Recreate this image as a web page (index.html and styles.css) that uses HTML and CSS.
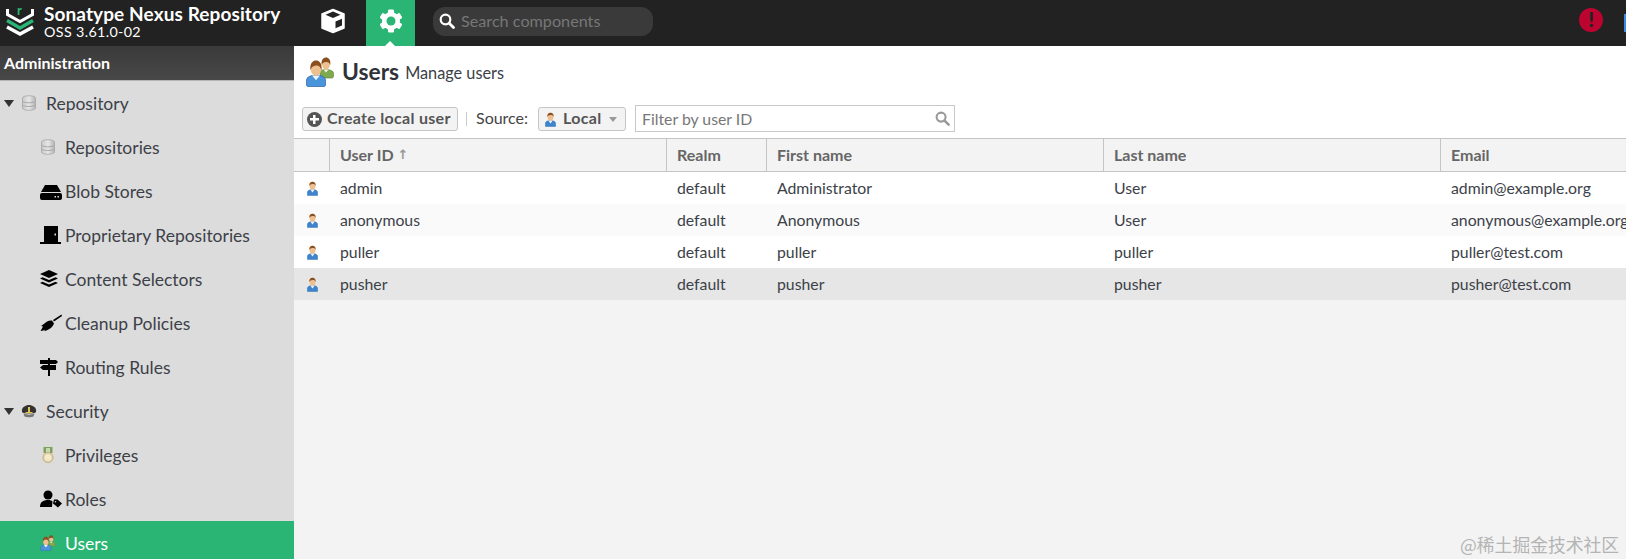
FILE: index.html
```html
<!DOCTYPE html>
<html lang="en">
<head>
<meta charset="utf-8">
<title>Users - Sonatype Nexus Repository</title>
<link rel="stylesheet" href="styles.css">
</head>
<body>
<svg class="defs" width="0" height="0" aria-hidden="true">
  <defs>
    <linearGradient id="db" x1="0" x2="1" y1="0" y2="0"><stop offset="0" stop-color="#c9c9c9"/><stop offset=".5" stop-color="#e6e6e6"/><stop offset="1" stop-color="#b5b5b5"/></linearGradient>
    <symbol id="i-db" viewBox="0 0 16 16">
      <path d="M1.500 3c0-3 13-3 13 0v10c0 3-13 3-13 0z" fill="url(#db)" stroke="#a6a6a6" stroke-width=".8"/>
      <path d="M1.500 6.300c2 2 11 2 13 0M1.500 10c2 2 11 2 13 0" fill="none" stroke="#9c9c9c" stroke-width=".8"/>
    </symbol>
    <symbol id="i-user" viewBox="2 0 12 16">
      <path d="M2.500 15.500v-3.400c0-1.600 1.800-2.400 3.300-2.800h4.400c1.500.4 3.300 1.200 3.300 2.800v3.400z" fill="#3d86cf" stroke="#2a62a6" stroke-width=".5"/>
      <path d="M5.600 9.200 8 12.300l2.400-3.100z" fill="#eef4f8"/>
      <ellipse cx="8" cy="5.200" rx="3.200" ry="4" fill="#efc08f"/>
      <path d="M4.600 5.200C4.200 1.600 6.200.5 8 .5s3.800 1.100 3.400 4.700C10.800 3.500 9.500 3 8 3.200s-2.800.3-3.400 2z" fill="#8a4f1d"/>
    </symbol>
    <symbol id="i-users" viewBox="0 0 28 30">
      <path d="M14 19v-3c0-2 2.200-3 3.800-3.400h4.400c1.600.4 5.300 1.400 5.300 3.400v3.500c0 .8-.7 1.500-1.500 1.500H17z" fill="#7fa94f" stroke="#5c8238" stroke-width=".6"/>
      <path d="M17.500 12.500l2.500 3 2.500-3z" fill="#f2f6ea"/>
      <ellipse cx="20" cy="7" rx="4" ry="5.500" fill="#efc08f"/>
      <path d="M15.700 8C15 2.500 17.500.5 20 .5s5 2 4.300 7.500c-.6-2.200-2.200-3.200-4.300-3s-3.600.8-4.300 3z" fill="#8a4f1d"/>
      <path d="M.5 28v-5c0-2.700 3.400-3.900 5.500-4.500h8c2.100.6 5.500 1.800 5.500 4.500v5c0 .8-.7 1.500-1.500 1.500H2c-.8 0-1.500-.7-1.500-1.500z" fill="#4a94dc" stroke="#2a62a6" stroke-width=".7"/>
      <path d="M6 18.500l4 4.800 4-4.800z" fill="#eef4f8"/>
      <ellipse cx="10" cy="12" rx="5.200" ry="6.800" fill="#efc08f"/>
      <path d="M4.500 13.500C3.500 6 7 3.500 10 3.500s6.500 2.500 5.500 10c-.7-3.500-2.800-5.300-5.500-5s-4.800 1.500-5.500 5z" fill="#8a4f1d"/>
    </symbol>
    <symbol id="i-cube" viewBox="0 0 26 26">
      <path d="M13 1.500 24 6v14l-11 4.500L2 20V6z" fill="#fff" stroke="#fff" stroke-width="1.500" stroke-linejoin="round"/>
      <path d="M13 3.500 20.500 6.800 13 10 5.500 6.800z" fill="#222"/>
      <path d="M15.500 13.500 22 10.800v6.700L15.500 20.300z" fill="#222"/>
    </symbol>
    <symbol id="i-gear" viewBox="0 0 24 24">
      <g fill="#fff">
        <rect x="9" y=".5" width="6" height="23" rx="1.200"/>
        <rect x="9" y=".5" width="6" height="23" rx="1.200" transform="rotate(60 12 12)"/>
        <rect x="9" y=".5" width="6" height="23" rx="1.200" transform="rotate(120 12 12)"/>
        <circle cx="12" cy="12" r="9"/>
      </g>
      <circle cx="12" cy="12" r="4.500" fill="#2ab574"/>
    </symbol>
    <symbol id="i-search" viewBox="0 0 16 16">
      <circle cx="6.500" cy="6.500" r="4.800" fill="none" stroke="currentColor" stroke-width="2.200"/>
      <path d="M10.200 10.200 14.500 14.500" stroke="currentColor" stroke-width="2.800" stroke-linecap="round"/>
    </symbol>
  </defs>
</svg>

<header class="topbar">
  <div class="brand">
    <svg class="logo" viewBox="0 0 28 28" aria-hidden="true">
      <polyline points="1.500,1 1.500,6.500 14,13.500 26.500,6.500 26.500,1" fill="none" stroke="#fff" stroke-width="3"/>
      <polyline points="1,12.500 14,20 27,12.500" fill="none" stroke="#2ab574" stroke-width="3.400"/>
      <polyline points="1,19 14,26 27,19" fill="none" stroke="#fff" stroke-width="3.400"/>
      <text class="logo-r" x="11" y="7">r</text>
    </svg>
    <div class="brand-text">
      <div class="brand-name">Sonatype Nexus Repository</div>
      <div class="brand-version">OSS 3.61.0-02</div>
    </div>
  </div>
  <nav class="modes">
    <a class="mode"><svg class="mode-icon cube"><use href="#i-cube"/></svg></a>
    <a class="mode active"><svg class="mode-icon"><use href="#i-gear"/></svg></a>
  </nav>
  <div class="search">
    <svg class="search-icon"><use href="#i-search"/></svg>
    <span>Search components</span>
  </div>
  <div class="top-right">
    <span class="alert">!</span>
    <span class="help-peek"></span>
  </div>
</header>

<div class="body">
  <aside class="sidebar">
    <div class="side-title">Administration</div>
    <ul class="tree">
      <li class="node parent"><span class="caret"></span><svg class="ni"><use href="#i-db"/></svg><span>Repository</span></li>
      <li class="node child"><svg class="ni"><use href="#i-db"/></svg><span>Repositories</span></li>
      <li class="node child"><svg class="ni wide" viewBox="0 0 22 18"><path d="M5 3h12l4 7H1z"/><path fill-rule="evenodd" d="M2 11h18a2 2 0 0 1 2 2v3a2 2 0 0 1-2 2H2a2 2 0 0 1-2-2v-3a2 2 0 0 1 2-2zm12.500 3v1.500H16V14zm3 0v1.500H19V14z"/></svg><span>Blob Stores</span></li>
      <li class="node child"><svg class="ni wide" viewBox="0 0 22 18"><path fill-rule="evenodd" d="M4 0h14v16h3v2H0v-2h4zm10.500 7.500v2h1.500v-2z"/></svg><span>Proprietary Repositories</span></li>
      <li class="node child"><svg class="ni wide" viewBox="0 0 22 18"><path d="M9 0 0 4l9 4 9-4zM0 8.500l9 4 9-4-2.500-1.200L9 10 2.500 7.300zM0 13l9 4 9-4-2.500-1.200L9 14.500l-6.500-2.700z"/></svg><span>Content Selectors</span></li>
      <li class="node child"><svg class="ni wide" viewBox="0 0 22 18"><path d="M21.500.5 13 6l1 1.500 8-5.500zM12 6.500c-3-.5-6 1-7.500 3L1 12l2 .5-2.500 4.500 3-.5 1-1v1.500c3-.5 8-3 9.500-7.500z"/></svg><span>Cleanup Policies</span></li>
      <li class="node child"><svg class="ni wide" viewBox="0 0 22 18"><path d="M8 0h2v2h6l2 2-2 2h-6v1h6v5h-6v6H8v-6H3l-3-2.500L3 7h5V6H0V2h8z"/></svg><span>Routing Rules</span></li>
      <li class="node parent"><span class="caret"></span><svg class="ni" viewBox="0 0 16 14"><path d="M1 8C0 3 5 1 8 1s8 2 7 7c-1 2-13 2-14 0z" fill="#333"/><path d="M2.500 9.500c3 1.500 8 1.500 11 0l-1 3c-2 1-7 1-9 0z" fill="#777"/><rect x="7" y="3" width="2" height="5" fill="#e2c44e"/><rect x="4.500" y="8" width="7" height="1.300" fill="#e2c44e"/></svg><span>Security</span></li>
      <li class="node child"><svg class="ni" viewBox="0 0 16 16"><rect x="3.500" y="0" width="9" height="6" fill="#7f9f5f"/><rect x="6" y="1" width="4" height="5" fill="#c8d8b0"/><circle cx="8" cy="10.500" r="5" fill="#e9dcae" stroke="#bfa97c"/><circle cx="8" cy="10.500" r="3" fill="#f3ead0"/></svg><span>Privileges</span></li>
      <li class="node child"><svg class="ni wide" viewBox="0 0 22 18"><circle cx="8" cy="5" r="4.500"/><path d="M0 17c0-5 3-7 8-7 2.500 0 3.500.5 4.500 1.500L12 17z"/><path fill-rule="evenodd" d="M14 9.500h3.500l4.500 4-4 4-5-4zM15.500 11a.8.8 0 1 0 0 1.600.8.8 0 0 0 0-1.600z"/></svg><span>Roles</span></li>
      <li class="node child selected"><svg class="ni"><use href="#i-users"/></svg><span>Users</span></li>
    </ul>
  </aside>

  <main class="main">
    <div class="page-title">
      <svg class="title-icon"><use href="#i-users"/></svg>
      <h1>Users</h1>
      <span class="subtitle">Manage users</span>
    </div>
    <div class="toolbar">
      <button class="btn create"><span class="plus"></span><span class="btn-text">Create local user</span></button>
      <span class="sep"></span>
      <span class="source">Source:</span>
      <button class="btn local"><svg class="row-icon"><use href="#i-user"/></svg><span class="btn-text">Local</span><span class="drop"></span></button>
      <div class="filter"><span>Filter by user ID</span><svg class="filter-icon"><use href="#i-search"/></svg></div>
    </div>
    <div class="grid">
      <div class="row head">
        <div class="cell"></div>
        <div class="cell">User ID <span class="sort">↑</span></div>
        <div class="cell">Realm</div>
        <div class="cell">First name</div>
        <div class="cell">Last name</div>
        <div class="cell">Email</div>
      </div>
      <div class="row">
        <div class="cell"><svg class="row-icon"><use href="#i-user"/></svg></div>
        <div class="cell">admin</div><div class="cell">default</div><div class="cell">Administrator</div><div class="cell">User</div><div class="cell">admin@example.org</div>
      </div>
      <div class="row alt">
        <div class="cell"><svg class="row-icon"><use href="#i-user"/></svg></div>
        <div class="cell">anonymous</div><div class="cell">default</div><div class="cell">Anonymous</div><div class="cell">User</div><div class="cell">anonymous@example.org</div>
      </div>
      <div class="row">
        <div class="cell"><svg class="row-icon"><use href="#i-user"/></svg></div>
        <div class="cell">puller</div><div class="cell">default</div><div class="cell">puller</div><div class="cell">puller</div><div class="cell">puller@test.com</div>
      </div>
      <div class="row hover">
        <div class="cell"><svg class="row-icon"><use href="#i-user"/></svg></div>
        <div class="cell">pusher</div><div class="cell">default</div><div class="cell">pusher</div><div class="cell">pusher</div><div class="cell">pusher@test.com</div>
      </div>
    </div>
  </main>
</div>
<div class="watermark">@稀土掘金技术社区</div>
</body>
</html>
```
FILE: styles.css
```css
* { box-sizing: border-box; }
html, body { margin: 0; height: 100%; overflow: hidden; }
body { width: 1626px; height: 559px; position: relative; font-family: "Lato", "Noto Sans", sans-serif; font-size: 16px; color: #333; display: flex; flex-direction: column; }
.defs { position: absolute; }

.topbar { flex: 0 0 46px; background: #222; display: flex; align-items: stretch; }
.brand { width: 314px; display: flex; align-items: center; padding-left: 6px; color: #fff; }
.logo { width: 28px; height: 28px; margin-right: 10px; margin-top: -2px; overflow: visible; }
.logo-r { font: 700 13px "Lato", sans-serif; fill: #2ab574; }
.brand-text { margin-top: -3px; }
.brand-name { font-weight: 700; font-size: 19px; letter-spacing: .1px; line-height: 20px; white-space: nowrap; }
.brand-version { font-size: 14.300px; line-height: 16px; letter-spacing: .35px; }
.modes { display: flex; }
.mode { width: 38px; display: flex; align-items: center; justify-content: center; }
.mode:first-child { margin-right: 14px; }
.mode.active { width: 49px; background: #2ab574; position: relative; }
.mode.active::after { content: ""; position: absolute; left: 19px; bottom: 0; border: 5px solid transparent; border-top: 0; border-bottom-color: #fff; }
.mode-icon { width: 24px; height: 24px; margin-top: -4px; }
.mode-icon.cube { width: 26px; height: 26px; margin-top: -5px; }
.search { width: 220px; height: 29px; margin: 7px 0 0 18px; border-radius: 12px; background: #3a3a3a; display: flex; align-items: center; padding: 0 0 2px 6px; color: #777; font-size: 16.200px; white-space: nowrap; }
.search-icon { width: 16px; height: 16px; color: #fff; margin-right: 6px; }
.top-right { margin-left: auto; display: flex; align-items: flex-start; }
.alert { width: 24px; height: 24px; margin-top: 8px; border-radius: 50%; background: #bc0430; color: #222; font-weight: 900; font-size: 20px; line-height: 23px; text-align: center; }
.help-peek { width: 2.500px; height: 18px; margin: 14px 0 0 20.500px; background: #3d8bdc; }

.body { flex: 1; display: flex; min-height: 0; }
.sidebar { flex: 0 0 294px; background: #dcdcdc; overflow: hidden; }
.side-title { height: 35px; background: linear-gradient(#3a3a3a, #484848); border-bottom: 1px solid #b5b5b5; color: #fff; font-weight: 700; font-size: 16px; line-height: 34px; padding-left: 4px; }
.tree { list-style: none; margin: 0; padding: 0; }
.node { height: 44px; display: flex; align-items: center; font-size: 17.500px; color: #3c4148; white-space: nowrap; }
.node.parent { padding-left: 4px; }
.node.child { padding-left: 40px; }
.caret { width: 0; height: 0; border: 5px solid transparent; border-top: 7px solid #333; border-bottom: 0; margin-right: 7px; }
.ni { width: 16px; height: 16px; margin-right: 9px; flex: none; }
.ni.wide { width: 22px; height: 18px; margin-right: 3px; fill: #000; }
.selected { background: #2ab574; color: #fff; }

.main { flex: 1; min-width: 0; background: #f3f3f3; display: flex; flex-direction: column; }
.page-title { height: 59px; background: #fff; display: flex; align-items: center; padding: 0 0 8px 12px; }
.title-icon { width: 28px; height: 30px; margin-right: 8px; }
h1 { margin: -2px 6px 0 0; font-size: 22.800px; font-weight: 700; color: #2f3339; }
.subtitle { font-size: 16.300px; color: #3c4148; margin-top: 1px; }
.toolbar { height: 33px; background: #fff; display: flex; align-items: flex-start; padding-left: 8px; font-size: 16px; }
.btn { height: 24px; margin-top: 2px; border: 1px solid #c5c5c5; border-radius: 3px; background: #f3f3f3; font: 700 16px "Lato", sans-serif; letter-spacing: .3px; color: #555; display: flex; align-items: center; padding: 0; white-space: nowrap; }
.btn-text { padding-bottom: 3px; }
.create { width: 156px; padding-left: 4px; }
.plus { width: 15px; height: 15px; border-radius: 50%; margin-right: 5px; background: linear-gradient(#fff, #fff) center / 9px 2.500px no-repeat, linear-gradient(#fff, #fff) center / 2.500px 9px no-repeat, #555; }
.sep { width: 1px; height: 14px; background: #ccc; margin: 7px 9px 0 8px; }
.source { line-height: 22px; margin: 2px 10px 0 0; color: #444; }
.local { width: 88px; padding-left: 6px; }
.local .row-icon { margin: 0 7px 0 0; }
.drop { width: 0; height: 0; border: 4px solid transparent; border-top: 5px solid #999; border-bottom: 0; margin: 1px 0 0 8px; }
.filter { width: 320px; height: 27px; margin-left: 9px; border: 1px solid #c8c8c8; background: #fff; color: #777; font-size: 15.800px; display: flex; align-items: center; justify-content: space-between; padding: 0 4px 1px 6px; }
.filter-icon { width: 15px; height: 15px; color: #999; }

.grid { display: flex; flex-direction: column; }
.row { display: grid; grid-template-columns: 35px 337px 100px 337px 337px 1fr; height: 32px; background: #fff; font-size: 15.800px; color: #3c4148; }
.row.alt { background: #fafafa; }
.row.hover { background: #e6e6e6; }
.cell { display: flex; align-items: center; padding: 0 0 2px 11px; white-space: nowrap; overflow: hidden; }
.row .cell:first-child { padding: 0 0 0 13px; }
.row-icon { width: 11px; height: 15px; flex: none; }
.head { height: 34px; background: #f3f3f3; border-top: 1px solid #c4c4c4; border-bottom: 1px solid #c4c4c4; font-weight: 700; font-size: 16px; color: #666; }
.head .cell { border-left: 1px solid #c4c4c4; padding-left: 10px; }
.head .cell:first-child { border-left: 0; }
.sort { font-family: "DejaVu Sans", sans-serif; color: #999; margin-left: 4px; font-size: 13px; }
.watermark { position: absolute; left: 1460px; top: 533px; font-family: "Noto Sans CJK SC", sans-serif; font-size: 17.800px; line-height: 22px; color: #b4b4b4; white-space: nowrap; }
```
